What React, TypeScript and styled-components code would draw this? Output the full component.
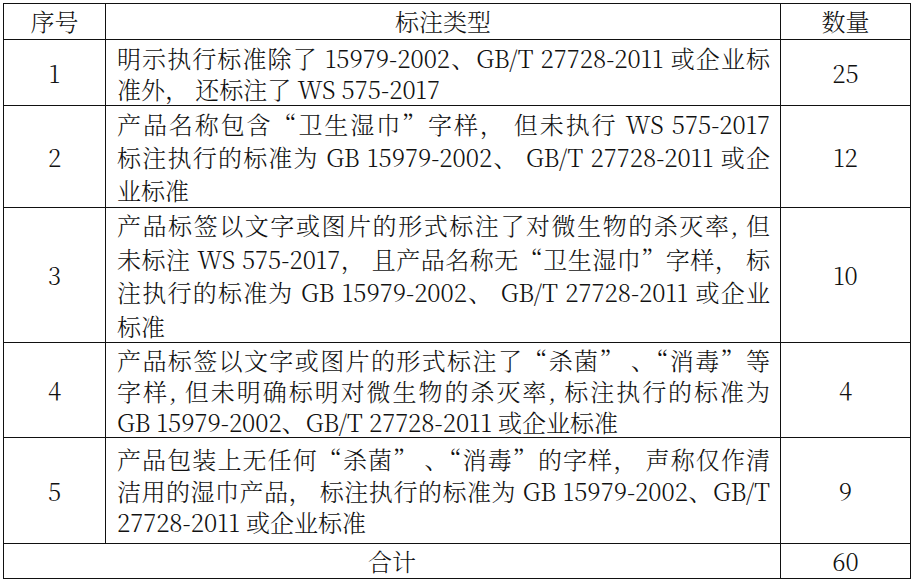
import React from "react";
import styled, { createGlobalStyle } from "styled-components";

const GlobalStyle = createGlobalStyle`
  html, body {
    margin: 0;
    padding: 0;
    background: #ffffff;
  }
  body {
    font-family: "Noto Serif CJK SC", "Liberation Serif", "Noto Sans CJK SC", serif;
    color: #111111;
  }
`;

interface Entry {
  no: string;
  lines: string[];
  count: string;
  height: number;
  lineHeight: number;
}

// each line is kept as it breaks in the source document
const entries: Entry[] = [
  {
    no: "1",
    lines: ["明示执行标准除了 15979-2002、GB/T 27728-2011 或企业标", "准外， 还标注了 WS 575-2017"],
    count: "25",
    height: 66,
    lineHeight: 31,
  },
  {
    no: "2",
    lines: [
      "产品名称包含“卫生湿巾”字样， 但未执行 WS 575-2017",
      "标注执行的标准为 GB 15979-2002、 GB/T 27728-2011 或企",
      "业标准",
    ],
    count: "12",
    height: 102,
    lineHeight: 33,
  },
  {
    no: "3",
    lines: [
      "产品标签以文字或图片的形式标注了对微生物的杀灭率, 但",
      "未标注 WS 575-2017， 且产品名称无“卫生湿巾”字样， 标",
      "注执行的标准为 GB 15979-2002、 GB/T 27728-2011 或企业",
      "标准",
    ],
    count: "10",
    height: 134,
    lineHeight: 33.5,
  },
  {
    no: "4",
    lines: [
      "产品标签以文字或图片的形式标注了“杀菌” 、“消毒”等",
      "字样, 但未明确标明对微生物的杀灭率, 标注执行的标准为",
      "GB 15979-2002、GB/T 27728-2011 或企业标准",
    ],
    count: "4",
    height: 95,
    lineHeight: 31,
  },
  {
    no: "5",
    lines: [
      "产品包装上无任何“杀菌” 、“消毒”的字样， 声称仅作清",
      "洁用的湿巾产品， 标注执行的标准为 GB 15979-2002、GB/T",
      "27728-2011 或企业标准",
    ],
    count: "9",
    height: 106,
    lineHeight: 31.5,
  },
];

const Table = styled.table`
  margin: 3px;
  width: 907px;
  border-collapse: collapse;
  table-layout: fixed;
  font-size: 24px;
  font-weight: 300;
`;

const Row = styled.tr<{ $height: number }>`
  height: ${(p) => p.$height}px;
`;

const Head = styled.th`
  border: 1px solid #111;
  font-weight: 300;
  text-align: center;
  vertical-align: middle;
  line-height: 30px;
  padding: 0 0 2px;
`;

const Cell = styled.td`
  border: 1px solid #111;
  text-align: center;
  vertical-align: middle;
  line-height: 30px;
  padding: 0;
`;

const TextCell = styled.td`
  border: 1px solid #111;
  vertical-align: middle;
  padding: 0 10px 0 11px;
`;

const Line = styled.div<{ $last: boolean; $lh: number }>`
  height: ${(p) => p.$lh}px;
  line-height: ${(p) => p.$lh}px;
  white-space: nowrap;
  text-align: justify;
  text-align-last: ${(p) => (p.$last ? "left" : "justify")};
`;

const App: React.FC = () => {
  return (
    <>
      <GlobalStyle />
      <Table lang="zh-CN">
        <colgroup>
          <col style={{ width: 102 }} />
          <col style={{ width: 675 }} />
          <col style={{ width: 130 }} />
        </colgroup>
        <thead>
          <Row $height={36}>
            <Head>序号</Head>
            <Head>标注类型</Head>
            <Head>数量</Head>
          </Row>
        </thead>
        <tbody>
          {entries.map((entry) => (
            <Row key={entry.no} $height={entry.height}>
              <Cell>{entry.no}</Cell>
              <TextCell>
                {entry.lines.map((line, idx) => (
                  <Line key={idx} $lh={entry.lineHeight} $last={idx === entry.lines.length - 1}>
                    {line}
                  </Line>
                ))}
              </TextCell>
              <Cell>{entry.count}</Cell>
            </Row>
          ))}
          <Row $height={35}>
            <Cell colSpan={2}>合计</Cell>
            <Cell>60</Cell>
          </Row>
        </tbody>
      </Table>
    </>
  );
};

export default App;
